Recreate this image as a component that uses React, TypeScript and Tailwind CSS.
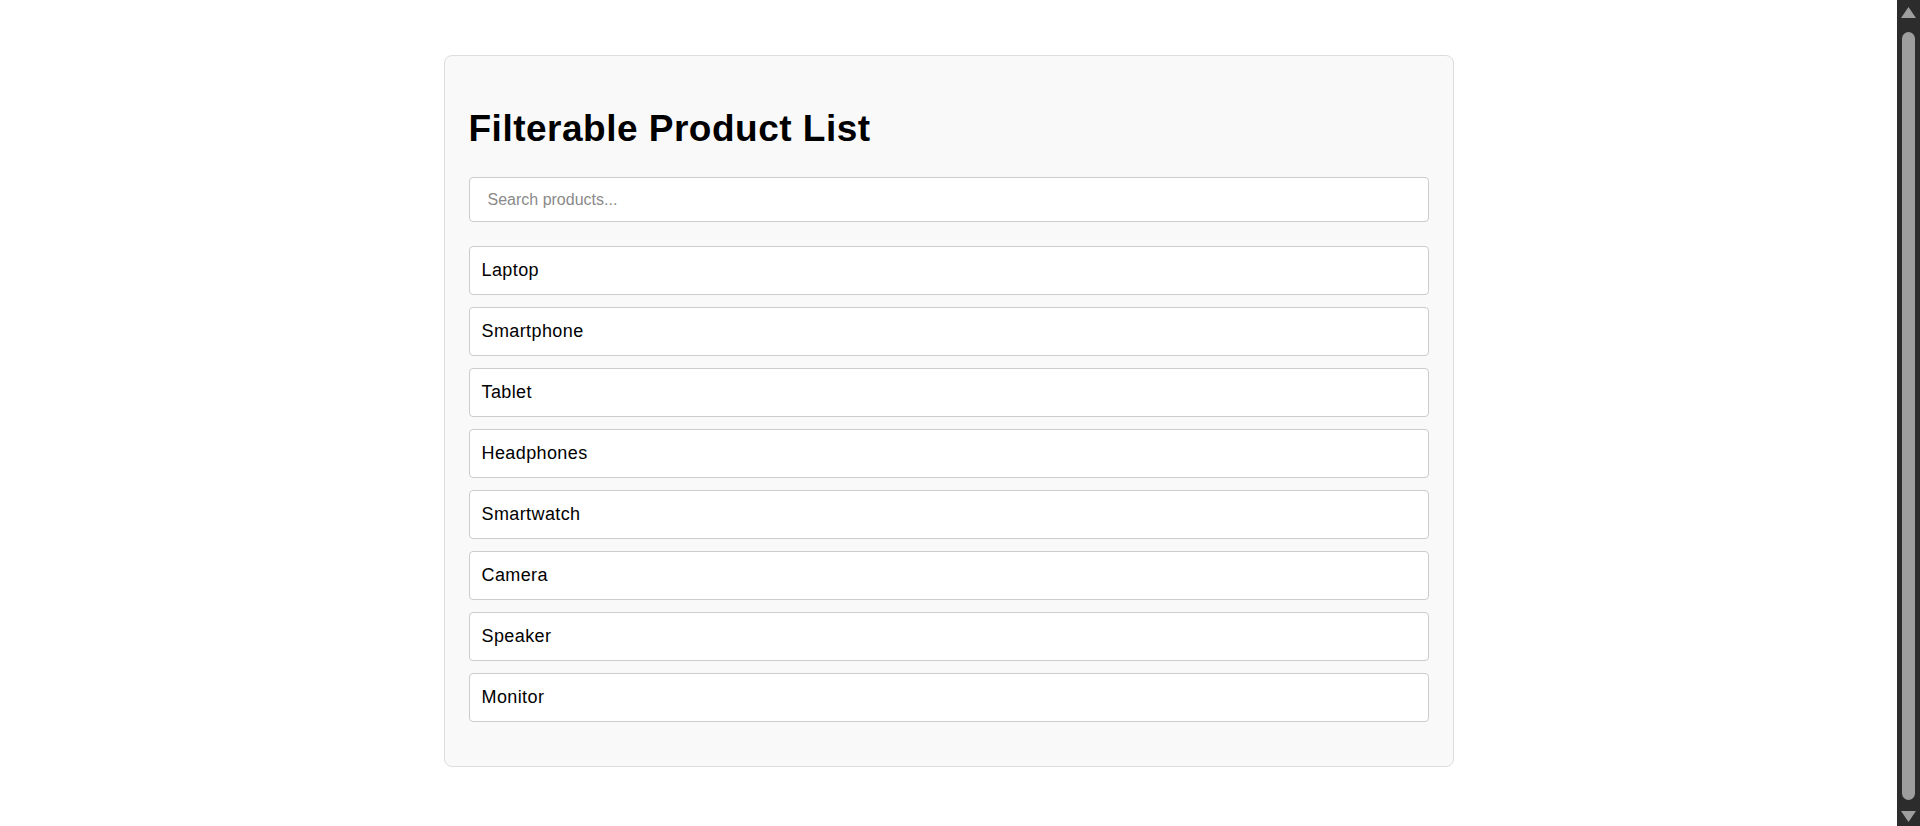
import React, { useState } from "react";

const products = [
  "Laptop",
  "Smartphone",
  "Tablet",
  "Headphones",
  "Smartwatch",
  "Camera",
  "Speaker",
  "Monitor",
];

export default function App() {
  const [query, setQuery] = useState("");
  const visible = products.filter((p) =>
    p.toLowerCase().includes(query.toLowerCase())
  );

  return (
    <div className="flex h-[826px] overflow-hidden bg-white font-['Liberation_Sans',Arial,sans-serif] text-black">
      <main className="flex-1 pt-[55px]">
        {/* Card */}
        <div className="mx-auto w-[1010px] rounded-lg border border-[#dddddd] bg-[#f9f9f9] px-[24px] pt-[24px] pb-[44px]">
          <h1 className="mt-[28px] mb-[27px] text-[37px] font-bold leading-[normal] tracking-[0.5px] text-black">
            Filterable Product List
          </h1>

          <input
            type="text"
            value={query}
            onChange={(e) => setQuery(e.target.value)}
            placeholder="Search products..."
            className="block h-[45px] w-full rounded-[4px] border border-[#cccccc] bg-white pl-[18px] pr-3 text-[16px] text-black outline-none placeholder:text-[#8a8a8a]"
          />

          <ul className="mt-[24px] flex flex-col gap-[12px]">
            {visible.map((p) => (
              <li
                key={p}
                className="flex h-[49px] items-center rounded-[4px] border border-[#cccccc] bg-white px-[12px] text-[18px] tracking-[0.4px] text-black"
              >
                {p}
              </li>
            ))}
          </ul>
        </div>
      </main>

      {/* scrollbar */}
      <aside className="flex w-[23px] flex-col items-center bg-[#2c2c2c] pt-[7px] pb-[4px]">
        <svg width="15" height="11" viewBox="0 0 15 11" className="shrink-0">
          <path d="M7.5 0 L15 11 L0 11 Z" fill="#9e9e9e" />
        </svg>
        <div className="mt-[14px] mb-[11px] w-[13px] flex-1 rounded-full bg-[#9e9e9e]" />
        <svg width="15" height="11" viewBox="0 0 15 11" className="shrink-0">
          <path d="M0 0 L15 0 L7.5 11 Z" fill="#9e9e9e" />
        </svg>
      </aside>
    </div>
  );
}
